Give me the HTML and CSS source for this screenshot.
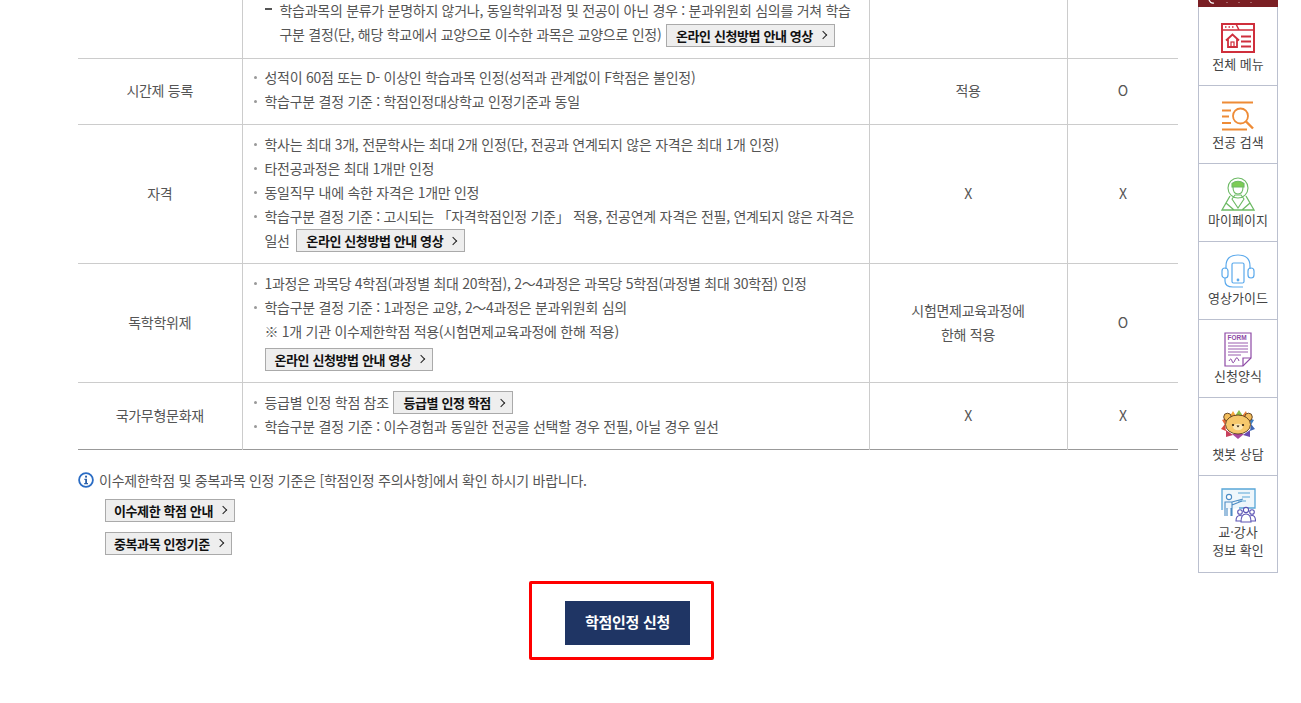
FILE: index.html
```html
<!DOCTYPE html>
<html lang="ko">
<head>
    <meta charset="UTF-8">
    <title>학점인정 신청</title>
    <link rel="stylesheet" href="styles.css">
</head>
<body>
    <main class="content">
        <table class="credit_table">
            <colgroup>
                <col class="col_name">
                <col class="col_desc">
                <col class="col_apply">
                <col class="col_limit">
            </colgroup>
            <tr class="row_cut">
                <td></td>
                <td class="desc">
                    <p class="dash">학습과목의 분류가 분명하지 않거나, 동일학위과정 및 전공이 아닌 경우 : 분과위원회 심의를 거쳐 학습구분 결정(단, 해당 학교에서 교양으로 이수한 과목은 교양으로 인정) <a class="btn" href="#">온라인 신청방법 안내 영상<i></i></a></p>
                </td>
                <td></td>
                <td></td>
            </tr>
            <tr class="row_part">
                <td>시간제 등록</td>
                <td class="desc">
                    <ul>
                        <li>성적이 60점 또는 D- 이상인 학습과목 인정(성적과 관계없이 F학점은 불인정)</li>
                        <li>학습구분 결정 기준 : 학점인정대상학교 인정기준과 동일</li>
                    </ul>
                </td>
                <td>적용</td>
                <td>O</td>
            </tr>
            <tr class="row_cert">
                <td>자격</td>
                <td class="desc">
                    <ul>
                        <li>학사는 최대 3개, 전문학사는 최대 2개 인정(단, 전공과 연계되지 않은 자격은 최대 1개 인정)</li>
                        <li>타전공과정은 최대 1개만 인정</li>
                        <li>동일직무 내에 속한 자격은 1개만 인정</li>
                        <li>학습구분 결정 기준 : 고시되는 「자격학점인정 기준」 적용, 전공연계 자격은 전필, 연계되지 않은 자격은 일선 <a class="btn" href="#">온라인 신청방법 안내 영상<i></i></a></li>
                    </ul>
                </td>
                <td>X</td>
                <td>X</td>
            </tr>
            <tr class="row_self">
                <td>독학학위제</td>
                <td class="desc">
                    <ul>
                        <li>1과정은 과목당 4학점(과정별 최대 20학점), 2～4과정은 과목당 5학점(과정별 최대 30학점) 인정</li>
                        <li>학습구분 결정 기준 : 1과정은 교양, 2～4과정은 분과위원회 심의<br>※ 1개 기관 이수제한학점 적용(시험면제교육과정에 한해 적용)<br><a class="btn btn_line" href="#">온라인 신청방법 안내 영상<i></i></a></li>
                    </ul>
                </td>
                <td>시험면제교육과정에<br>한해 적용</td>
                <td>O</td>
            </tr>
            <tr class="row_heritage">
                <td>국가무형문화재</td>
                <td class="desc">
                    <ul>
                        <li>등급별 인정 학점 참조 <a class="btn" href="#">등급별 인정 학점<i></i></a></li>
                        <li>학습구분 결정 기준 : 이수경험과 동일한 전공을 선택할 경우 전필, 아닐 경우 일선</li>
                    </ul>
                </td>
                <td>X</td>
                <td>X</td>
            </tr>
        </table>

        <p class="notice">
            <svg class="notice_icon" width="16" height="16" viewBox="0 0 16 16">
                <circle cx="8" cy="8" r="6.9" fill="none" stroke="#2a6cc4" stroke-width="1.8"/>
                <rect x="7.1" y="3.7" width="1.9" height="1.9" fill="#2a5fa8"/>
                <path d="M6.4 6.8H9V11H10V12.2H6.2V11H7.2V8H6.4Z" fill="#2a5fa8"/>
            </svg>
            이수제한학점 및 중복과목 인정 기준은 [학점인정 주의사항]에서 확인 하시기 바랍니다.
        </p>
        <div class="notice_btns">
            <a class="btn" href="#">이수제한 학점 안내<i></i></a>
            <a class="btn" href="#">중복과목 인정기준<i></i></a>
        </div>

        <div class="apply_box">
            <a class="apply_btn" href="#">학점인정 신청</a>
        </div>
    </main>

    <aside class="quick">
        <div class="quick_top">
            <svg width="78" height="7" viewBox="0 0 78 7" fill="none" stroke="#fff" stroke-width="1.2">
                <path d="M11 0Q13 4 16 3"/>
                <path d="M29 2V3M41 2V3M53 2V3" stroke="#caa" stroke-width="1"/>
            </svg>
        </div>
        <a class="quick_item" href="#">
            <span class="quick_icon">
                <svg width="36" height="32" viewBox="0 0 36 32" fill="none" stroke="#cf2f3c" stroke-width="2">
                    <path d="M2 2H34V30H2Z"/>
                    <path d="M2 8H19L16 2M19 8H34" stroke-width="1.5"/>
                    <path d="M5 5H6.5M8.5 5H10M12 5H13.5" stroke-width="1.5"/>
                    <path d="M6 18.5L12.5 12.5L19 18.5M8 17V25H17V17" stroke-width="1.8"/>
                    <rect x="11" y="20" width="3" height="5" stroke-width="1.2"/>
                    <path d="M21 14.5H31M21 19.5H31M21 24.5H31" stroke-width="1.8"/>
                </svg>
            </span>
            <span class="quick_label">전체 메뉴</span>
        </a>
        <a class="quick_item" href="#">
            <span class="quick_icon">
                <svg width="34" height="30" viewBox="0 0 34 30" fill="none" stroke="#ee8b36" stroke-width="1.8">
                    <path d="M1 1.500H32M1 28.500H26M1 9.500H10M1 15.500H8M1 22H10"/>
                    <circle cx="19.500" cy="15" r="7.500"/>
                    <path d="M25 20.500L32 27.500" stroke-width="2.400"/>
                </svg>
            </span>
            <span class="quick_label">전공 검색</span>
        </a>
        <a class="quick_item" href="#">
            <span class="quick_icon">
                <svg width="34" height="34" viewBox="0 0 34 34" fill="none" stroke="#6cba64" stroke-width="1.1">
                    <circle cx="17" cy="11" r="10"/>
                    <path d="M11 6.500Q17 2 23 6.500V10H11Z" fill="#7ccc54"/>
                    <path d="M12 10Q12 17 17 17Q22 17 22 10"/>
                    <path d="M11 22L14 18H20L23 22L17 31Z"/>
                    <path d="M9 19L1 33H33L25 19M5 26L13 33M29 26L21 33" stroke-width="1.300"/>
                </svg>
            </span>
            <span class="quick_label">마이페이지</span>
        </a>
        <a class="quick_item" href="#">
            <span class="quick_icon">
                <svg width="34" height="35" viewBox="0 0 34 35" fill="none" stroke="#5aa9ec" stroke-width="1.2">
                    <path d="M5 15V12Q5 1 17 1Q29 1 29 12V15"/>
                    <rect x="1" y="14" width="6" height="10" rx="3"/>
                    <rect x="27" y="14" width="6" height="10" rx="3"/>
                    <rect x="11" y="9" width="12" height="20" rx="1.500"/>
                    <circle cx="17" cy="26" r="0.800" fill="#5aa9ec"/>
                    <path d="M4 24V27Q4 33 12 33H22"/>
                </svg>
            </span>
            <span class="quick_label">영상가이드</span>
        </a>
        <a class="quick_item" href="#">
            <span class="quick_icon">
                <svg width="28" height="35" viewBox="0 0 28 35" fill="none" stroke="#8e4aa6" stroke-width="1.2">
                    <path d="M1 1H27V26L19 34H1Z"/>
                    <path d="M27 26H19V34"/>
                    <text class="form_txt" x="3.500" y="8">FORM</text>
                    <path d="M4 11H24M4 14H24M4 17H24M4 20H24M4 23H17" stroke-width="0.900"/>
                    <path d="M5 29Q7 25 8 29T11 28T15 29" stroke-width="1"/>
                </svg>
            </span>
            <span class="quick_label">신청양식</span>
        </a>
        <a class="quick_item" href="#">
            <span class="quick_icon">
                <svg width="34" height="35" viewBox="0 0 34 35">
                    <path d="M9 6L12 1L15 6Z" fill="#f4a83c"/>
                    <path d="M14 6L18 0L22 6Z" fill="#8cbf4a"/>
                    <path d="M21 6L25 1L27 7Z" fill="#e8803a"/>
                    <path d="M28 8L33 10L30 15Z" fill="#3f7fc4"/>
                    <path d="M30 14L34 19L29 21Z" fill="#3f66b4"/>
                    <path d="M29 20L29 27L22 25Z" fill="#6a4ab0"/>
                    <path d="M23 24L17 29L11 24Z" fill="#a8489e"/>
                    <path d="M12 25L5 27L5 20Z" fill="#c8405c"/>
                    <path d="M5 21L0 19L4 14Z" fill="#d8483c"/>
                    <path d="M4 15L1 10L6 8Z" fill="#e8683a"/>
                    <circle cx="6.500" cy="7" r="3.800" fill="#f2bd5c" stroke="#5a3a1c" stroke-width="0.900"/>
                    <circle cx="27.500" cy="7" r="3.800" fill="#f2bd5c" stroke="#5a3a1c" stroke-width="0.900"/>
                    <ellipse cx="17" cy="14.500" rx="12.500" ry="9.500" fill="#f6c86c" stroke="#5a3a1c" stroke-width="0.900"/>
                    <ellipse cx="17" cy="17" rx="5" ry="3.200" fill="#fbe6b4"/>
                    <circle cx="12" cy="15" r="1.100" fill="#2a1a10"/>
                    <circle cx="22" cy="15" r="1.100" fill="#2a1a10"/>
                    <path d="M15.500 15.500H18.500L17 17.500Z" fill="#2a1a10"/>
                </svg>
            </span>
            <span class="quick_label">챗봇 상담</span>
        </a>
        <a class="quick_item quick_last" href="#">
            <span class="quick_icon">
                <svg width="35" height="35" viewBox="0 0 35 35" fill="none">
                    <path d="M1 1H34V20H18L1 22Z" fill="#eef6fb"/>
                    <path d="M1 22V1H34V20H18" stroke="#58a6d8" stroke-width="1.300"/>
                    <path d="M17 5H29M21 9H29M17 13H25" stroke="#58a6d8" stroke-width="1.100"/>
                    <circle cx="8" cy="9" r="2.600" fill="#fff" stroke="#4c8cc4" stroke-width="1.100"/>
                    <path d="M4 28V14H11L22 11M11 17L21 13M6 28V20M10 28V20M11 14V28" stroke="#4c8cc4" stroke-width="1.100"/>
                    <g fill="#fff" stroke="#5c54b4" stroke-width="1.100">
                        <circle cx="19" cy="24" r="2.300"/>
                        <circle cx="31" cy="24" r="2.300"/>
                        <path d="M15 33Q15 27.500 19 27.500Q23 27.500 23 33Z"/>
                        <path d="M27 33Q27 27.500 31 27.500Q34.500 27.500 34.500 33Z"/>
                        <circle cx="25" cy="22" r="2.600"/>
                        <path d="M20 34Q20 26 25 26Q30 26 30 34Z"/>
                    </g>
                </svg>
            </span>
            <span class="quick_label">교·강사<br>정보 확인</span>
        </a>
    </aside>
</body>
</html>
```

FILE: styles.css
```css
body{
    margin: 0;
    font-family: "Noto Sans CJK KR", "Noto Sans", sans-serif;
    font-size: 14px;
    color: #555;
    background: #fff;
    height: 703px;
    overflow: hidden;
}
a{
    text-decoration: none;
}
p, ul{
    margin: 0;
    padding: 0;
}
ul{
    list-style: none;
}

.content{
    width: 1100px;
    margin-left: 78px;
}

.credit_table{
    width: 1100px;
    table-layout: fixed;
    border-collapse: collapse;
    border-bottom: 1px solid #999;
}
.col_name{ width: 164px; }
.col_desc{ width: 627px; }
.col_apply{ width: 198px; }
.col_limit{ width: 111px; }

.credit_table td{
    border-top: 1px solid #ccc;
    border-left: 1px solid #ccc;
    padding: 0 10px 2px;
    text-align: center;
    vertical-align: middle;
    line-height: 24px;
    letter-spacing: -0.28px;
}
.credit_table tr:first-child td{
    border-top: none;
}
.credit_table td:first-child{
    border-left: none;
}
.credit_table td.desc{
    text-align: left;
    vertical-align: top;
    padding: 7px 10px 0 10px;
}

.row_cut{ height: 58px; }
.row_part{ height: 66px; }
.row_cert{ height: 139px; }
.row_self{ height: 119px; }
.row_heritage{ height: 67px; }

.credit_table .row_cut td.desc{
    padding-top: 0;
}
.row_cut .dash{
    position: relative;
    padding-left: 27px;
    margin-top: -2px;
}
.dash::before{
    content: "";
    position: absolute;
    left: 12px;
    top: 10px;
    width: 7px;
    height: 2px;
    background: #555;
}
.desc li{
    position: relative;
    padding-left: 12px;
}
.desc li::before{
    content: "";
    position: absolute;
    left: 1px;
    top: 11px;
    width: 3px;
    height: 3px;
    border-radius: 50%;
    background: #999;
}
.credit_table .row_part td.desc{
    padding-top: 6px;
}

.btn{
    display: inline-flex;
    align-items: center;
    height: 21px;
    line-height: 21px;
    padding: 0 8px 0 9px;
    margin: -3px 0 -1px 1px;
    border: 1px solid #aaa;
    background: #eee;
    color: #111;
    font-size: 13px;
    font-weight: 700;
    letter-spacing: -0.4px;
    vertical-align: middle;
}
.btn i{
    display: inline-block;
    width: 5px;
    height: 5px;
    margin-left: 7px;
    border-top: 1.4px solid #222;
    border-right: 1.4px solid #222;
    transform: rotate(45deg);
}
.row_cert .btn{
    margin-left: 3px;
}
.row_self .btn_line{
    margin-top: 4px;
    margin-left: 0;
}

.notice{
    display: flex;
    align-items: center;
    gap: 5px;
    margin-top: 18px;
    line-height: 24px;
    letter-spacing: -0.25px;
}
.notice_btns{
    display: flex;
    flex-direction: column;
    align-items: flex-start;
    gap: 10px;
    margin: 7px 0 0 27px;
}
.notice_btns .btn{
    margin: 0;
    padding-left: 8px;
}

.apply_box{
    width: 125px;
    height: 56px;
    margin: 26px 0 0 451px;
    padding: 17px 21px 0 33px;
    border: 3px solid #f00;
    border-radius: 2px;
}
.apply_btn{
    display: block;
    height: 44px;
    line-height: 42px;
    text-align: center;
    background: #1f3564;
    color: #fff;
    font-size: 15px;
    font-weight: 700;
    letter-spacing: -0.3px;
}

.quick{
    position: absolute;
    top: 0;
    left: 1198px;
    width: 78px;
    border: 1px solid #bbc0cf;
    border-top: none;
    background: #fff;
    text-align: center;
    color: #444;
    font-size: 13px;
}
.quick_top{
    height: 7px;
    margin: 0 -1px;
    background: #7a1f24;
    overflow: hidden;
}
.quick_top svg{
    display: block;
}
.quick_item{
    display: block;
    padding: 12px 0;
    border-top: 1px solid #bbc0cf;
    color: #444;
}
.quick_top + .quick_item{
    border-top: none;
    padding-top: 13px;
}
.quick_last{
    padding-bottom: 13px;
}
.quick_icon{
    display: flex;
    align-items: center;
    justify-content: center;
    height: 35px;
}
.quick_label{
    display: block;
    line-height: 18px;
}
.form_txt{
    font-family: "Liberation Sans", sans-serif;
    font-size: 6.5px;
    font-weight: 700;
    fill: #8e4aa6;
    stroke: none;
}
```
